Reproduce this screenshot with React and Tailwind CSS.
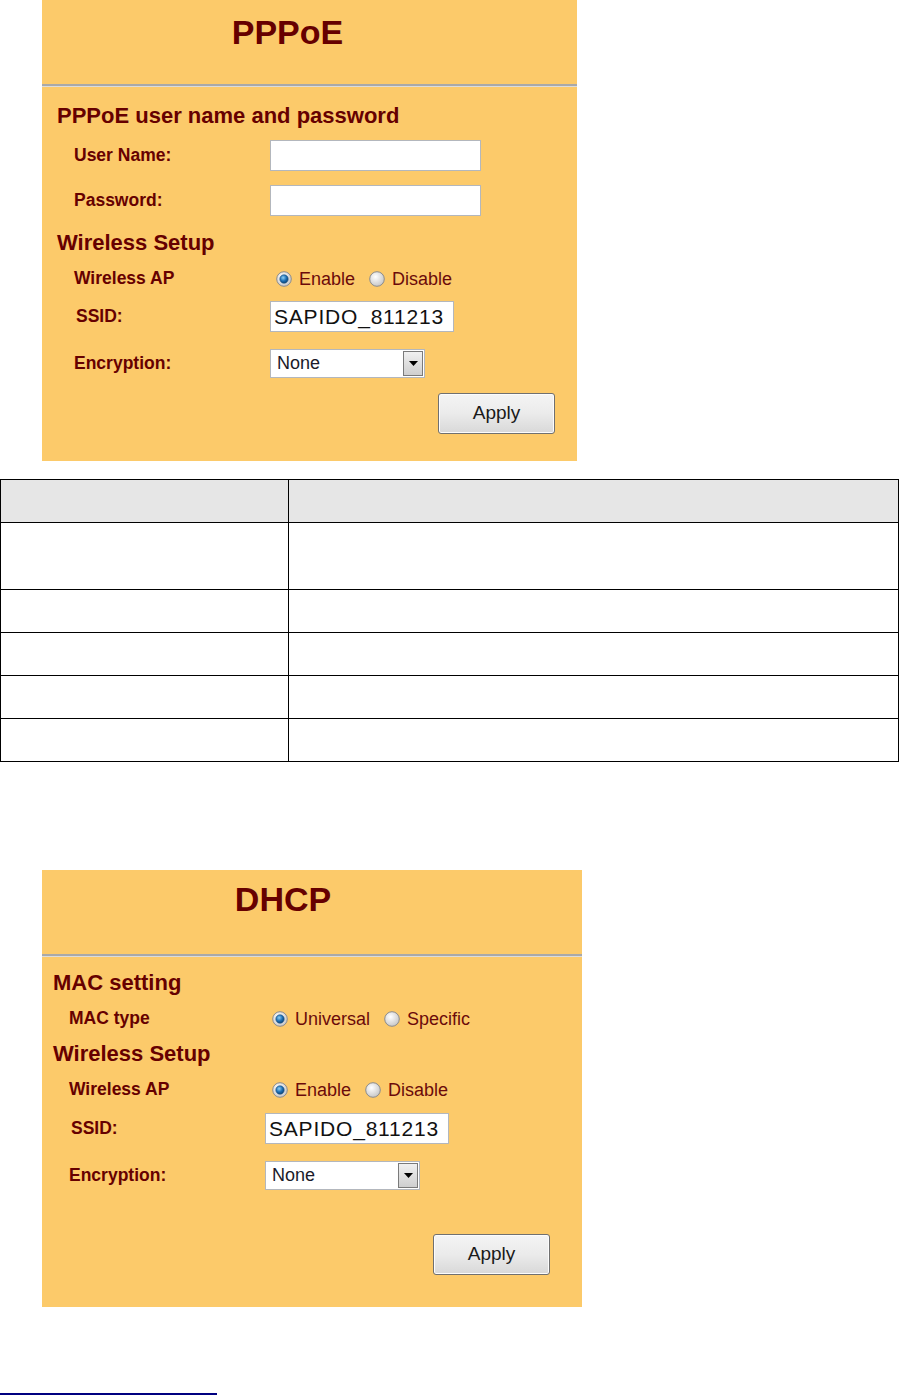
const font = { fontFamily: '"Liberation Sans", Arial, sans-serif' };

const Radio = ({ checked }) => (
  <svg width="16" height="16" viewBox="0 0 16 16" className="shrink-0">
    <defs>
      <radialGradient id="rOff" cx="40%" cy="35%" r="70%">
        <stop offset="0%" stopColor="#ffffff" />
        <stop offset="100%" stopColor="#c4c4c4" />
      </radialGradient>
      <radialGradient id="rOn" cx="40%" cy="35%" r="70%">
        <stop offset="0%" stopColor="#8fd0f5" />
        <stop offset="55%" stopColor="#1d6fb4" />
        <stop offset="100%" stopColor="#0b3f6e" />
      </radialGradient>
    </defs>
    <circle cx="8" cy="8" r="7.3" fill="url(#rOff)" stroke="#8c8c8c" strokeWidth="1" />
    {checked && <circle cx="8" cy="8" r="4.2" fill="url(#rOn)" stroke="#174f80" strokeWidth="0.6" />}
  </svg>
);

const Label = ({ children }) => (
  <div className="w-[196px] shrink-0 text-[17.5px] font-bold text-[#660000]">{children}</div>
);

const Header = ({ children, pad }) => (
  <div className={`flex h-[30px] items-center ${pad} text-[22px] font-bold text-[#660000]`}>{children}</div>
);

const TextBox = ({ width, value }) => (
  <div
    className={`flex h-[31px] ${width} items-center border-[1.5px] border-[#b3b7bd] bg-white pl-[3px] text-[21px] tracking-[0.8px] text-[#111]`}
  >
    {value}
  </div>
);

const Select = () => (
  <div className="flex h-[29px] w-[155px] items-stretch border-[1.5px] border-[#b3b7bd] bg-white">
    <div className="flex flex-1 items-center pl-[6px] text-[18px] text-[#1a1a2a]">None</div>
    <div className="m-[1px] flex w-[20px] items-center justify-center border border-[#7a7a7a] bg-gradient-to-b from-[#f0f0f0] to-[#cfcfcf]">
      <svg width="9" height="5" viewBox="0 0 9 5">
        <path d="M0 0 H9 L4.5 5 Z" fill="#000" />
      </svg>
    </div>
  </div>
);

const RadioGroup = ({ options, offset }) => (
  <div className={`flex items-center ${offset} text-[18px] text-[#6b0a0a]`}>
    {options.map((o, i) => (
      <div key={o.text} className={`flex items-center gap-[7px] ${i > 0 ? "ml-[14px]" : ""}`}>
        <Radio checked={o.checked} />
        <span>{o.text}</span>
      </div>
    ))}
  </div>
);

const ApplyButton = () => (
  <div className="flex h-[41px] w-[117px] items-center justify-center rounded-[3px] border border-[#707070] bg-gradient-to-b from-[#f4f4f4] via-[#ebebeb] to-[#d8d8d8] text-[19px] text-[#1a1a1a] shadow-[inset_0_0_0_1px_#fcfcfc]">
    Apply
  </div>
);

const Title = ({ children, pad }) => (
  <div className={`h-[84px] ${pad} text-center text-[34px] font-bold leading-[40px] text-[#660000]`}>{children}</div>
);

const Divider = () => (
  <div className="h-[3px] border-t-2 border-[#a9a9a9] bg-[#dcdcdc]" />
);

const PPPoEPanel = () => (
  <div className="ml-[42px] h-[461px] w-[535px] bg-[#fcca6a]">
    <Title pad="pt-[12px] pr-[44px]">PPPoE</Title>
    <Divider />
    <div className="mt-[13px]">
      <Header pad="pl-[15px]">PPPoE user name and password</Header>
      <div className="mt-[10px] flex h-[31px] items-center pl-[32px]">
        <Label>User Name:</Label>
        <TextBox width="w-[211px]" value="" />
      </div>
      <div className="mt-[14px] flex h-[31px] items-center pl-[32px]">
        <Label>Password:</Label>
        <TextBox width="w-[211px]" value="" />
      </div>
      <div className="mt-[11px]">
        <Header pad="pl-[15px]">Wireless Setup</Header>
      </div>
      <div className="mt-[7px] flex h-[28px] items-center pl-[32px]">
        <Label>Wireless AP</Label>
        <RadioGroup
          offset="ml-[6px] mt-[2px]"
          options={[
            { text: "Enable", checked: true },
            { text: "Disable", checked: false },
          ]}
        />
      </div>
      <div className="mt-[9px] flex h-[31px] items-center pl-[32px]">
        <Label>
          <span className="pl-[2px]">SSID:</span>
        </Label>
        <TextBox width="w-[184px]" value="SAPIDO_811213" />
      </div>
      <div className="mt-[17px] flex h-[29px] items-center pl-[32px]">
        <Label>Encryption:</Label>
        <Select />
      </div>
      <div className="mt-[15px] flex justify-end pr-[22px]">
        <ApplyButton />
      </div>
    </div>
  </div>
);

const DHCPPanel = () => (
  <div className="ml-[42px] h-[437px] w-[540px] bg-[#fcca6a]">
    <Title pad="pt-[9px] pr-[58px]">DHCP</Title>
    <Divider />
    <div className="mt-[10px]">
      <Header pad="pl-[11px]">MAC setting</Header>
      <div className="mt-[7px] flex h-[28px] items-center pl-[27px]">
        <Label>MAC type</Label>
        <RadioGroup
          offset="ml-[7px] mt-[2px]"
          options={[
            { text: "Universal", checked: true },
            { text: "Specific", checked: false },
          ]}
        />
      </div>
      <div className="mt-[6px]">
        <Header pad="pl-[11px]">Wireless Setup</Header>
      </div>
      <div className="mt-[7px] flex h-[28px] items-center pl-[27px]">
        <Label>Wireless AP</Label>
        <RadioGroup
          offset="ml-[7px] mt-[2px]"
          options={[
            { text: "Enable", checked: true },
            { text: "Disable", checked: false },
          ]}
        />
      </div>
      <div className="mt-[10px] flex h-[31px] items-center pl-[27px]">
        <Label>
          <span className="pl-[2px]">SSID:</span>
        </Label>
        <TextBox width="w-[184px]" value="SAPIDO_811213" />
      </div>
      <div className="mt-[17px] flex h-[29px] items-center pl-[27px]">
        <Label>Encryption:</Label>
        <Select />
      </div>
      <div className="mt-[44px] flex justify-end pr-[32px]">
        <ApplyButton />
      </div>
    </div>
  </div>
);

const rows = ["h-[67px]", "h-[43px]", "h-[43px]", "h-[43px]", "h-[43px]"];

const InfoTable = () => (
  <table className="mt-[18px] w-[899px] table-fixed border-collapse">
    <thead>
      <tr className="h-[43px] bg-[#e6e6e6]">
        <th className="w-[288px] border-[1.5px] border-black"></th>
        <th className="border-[1.5px] border-black"></th>
      </tr>
    </thead>
    <tbody>
      {rows.map((h, i) => (
        <tr key={i} className={h}>
          <td className="border-[1.5px] border-black"></td>
          <td className="border-[1.5px] border-black"></td>
        </tr>
      ))}
    </tbody>
  </table>
);

export default function App() {
  return (
    <div className="h-[1395px] bg-white" style={font}>
      <PPPoEPanel />
      <InfoTable />
      <div className="mt-[108px]">
        <DHCPPanel />
      </div>
      <div className="mt-[86px] h-[2px] w-[217px] bg-[#000080]" />
    </div>
  );
}
